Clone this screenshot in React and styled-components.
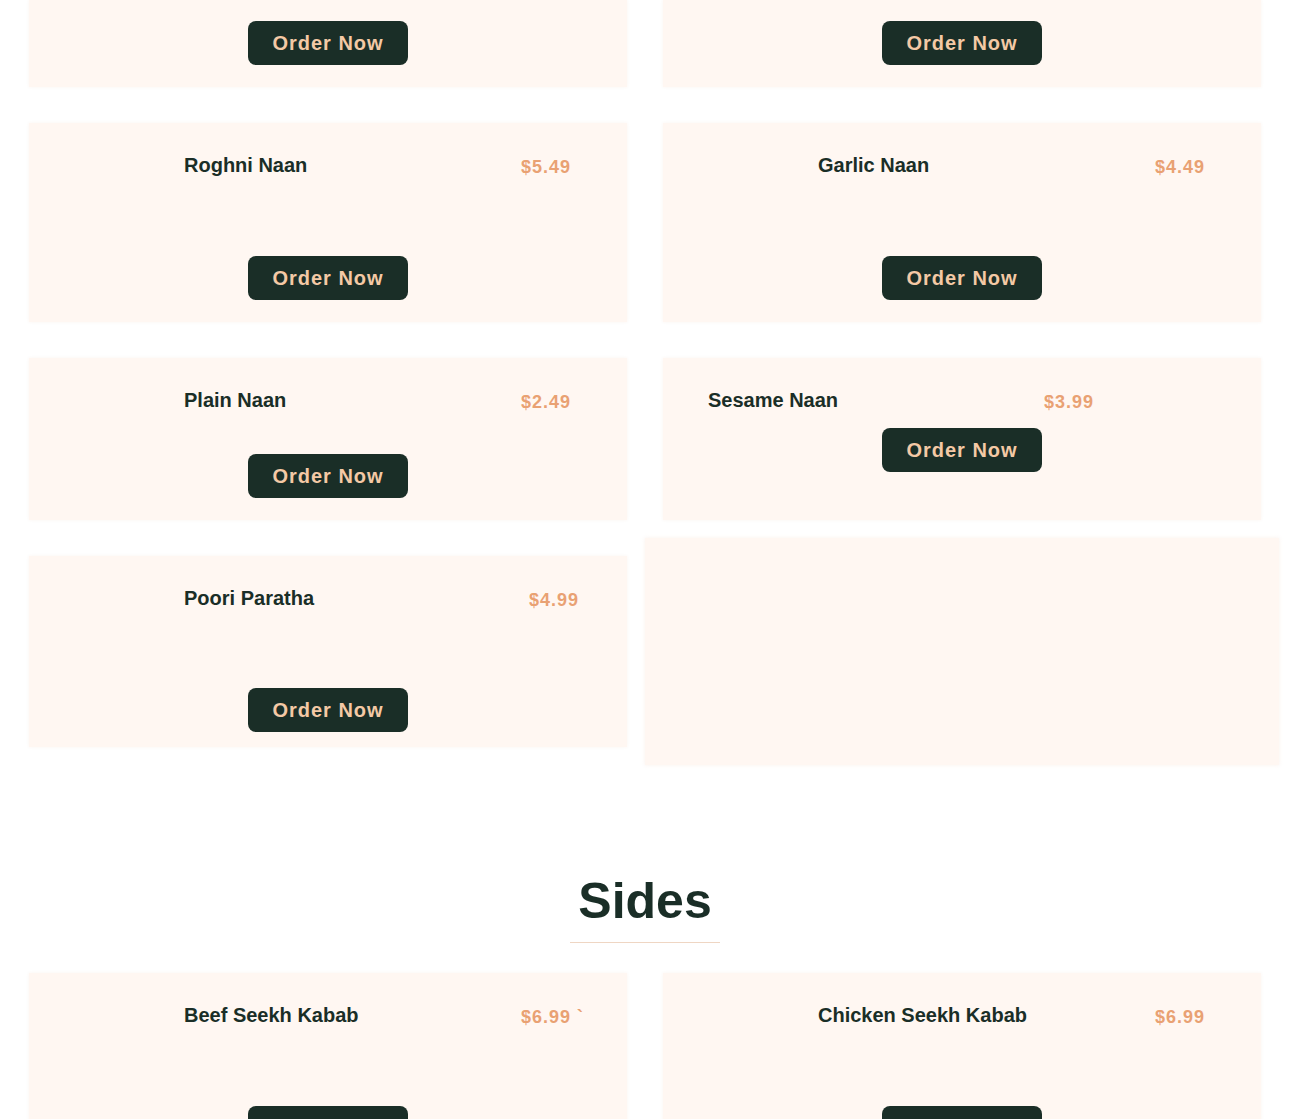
import React from 'react';
import styled, { createGlobalStyle } from 'styled-components';

const colors = {
  bg: '#ffffff',
  card: '#fff7f2',
  dark: '#1a2e27',
  peach: '#f4c9a5',
  price: '#e9a173',
  line: '#efd6c3',
};

const GlobalStyle = createGlobalStyle`
  * { box-sizing: border-box; }
  body {
    margin: 0;
    background: ${colors.bg};
    font-family: "Liberation Sans", Arial, sans-serif;
    color: ${colors.dark};
  }
`;

const naan = [
  { id: 'top-l', h: 87, top: true },
  { id: 'top-r', h: 87, top: true },
  { id: 'roghni', name: 'Roghni Naan', price: '$5.49', h: 199, pr: 56 },
  { id: 'garlic', name: 'Garlic Naan', price: '$4.49', h: 199, pr: 56 },
  { id: 'plain', name: 'Plain Naan', price: '$2.49', h: 162, pr: 56 },
  { id: 'sesame', name: 'Sesame Naan', price: '$3.99', h: 162, pl: 45, pr: 167, compact: true },
  { id: 'poori', name: 'Poori Paratha', price: '$4.99', h: 191, pr: 48, pb: 15 },
  { id: 'blank', blank: true },
];

const sides = [
  { id: 'beef', name: 'Beef Seekh Kabab', price: '$6.99 `', h: 199, pr: 43 },
  { id: 'chicken', name: 'Chicken Seekh Kabab', price: '$6.99', h: 199, pr: 56 },
];

const MenuCard = ({ item }) => {
  if (item.blank) return <GhostCard />;
  return (
    <Card $h={item.h} $top={item.top} $pb={item.pb}>
      {!item.top && (
        <Header $pl={item.pl} $pr={item.pr}>
          <Name>{item.name}</Name>
          <Price>{item.price}</Price>
        </Header>
      )}
      <OrderBtn $compact={item.compact}>Order Now</OrderBtn>
    </Card>
  );
};

const App = () => {
  return (
    <>
      <GlobalStyle />
      <Page>
        <Grid>
          {naan.map((item) => (
            <MenuCard key={item.id} item={item} />
          ))}
        </Grid>

        <SectionHead>
          <Title>Sides</Title>
          <Underline />
        </SectionHead>

        <Grid>
          {sides.map((item) => (
            <MenuCard key={item.id} item={item} />
          ))}
        </Grid>
      </Page>
    </>
  );
};

export default App;

const Page = styled.div`
  width: 1290px;
  padding: 0 29px;
  height: 1119px;
  overflow: hidden;
`;

const Grid = styled.div`
  display: grid;
  grid-template-columns: 1fr 1fr;
  column-gap: 36px;
  row-gap: 36px;
  align-items: start;
`;

const Card = styled.div`
  background: ${colors.card};
  height: ${(p) => p.$h}px;
  display: flex;
  flex-direction: column;
  padding: ${(p) => (p.$top ? '21px' : '29px')} 0 ${(p) => p.$pb || 22}px;
  box-shadow: 0 0 3px rgba(240, 220, 205, 0.3);
`;

const GhostCard = styled.div`
  background: ${colors.card};
  width: calc(100% + 36px);
  height: 227px;
  margin: -18px -18px 0;
  box-shadow: 0 0 4px rgba(240, 220, 205, 0.4);
`;

const Header = styled.div`
  display: flex;
  align-items: center;
  justify-content: space-between;
  padding: 0 ${(p) => p.$pr || 56}px 0 ${(p) => p.$pl || 155}px;
`;

const Name = styled.h3`
  margin: 0;
  font-size: 20px;
  font-weight: bold;
  line-height: 23px;
  color: ${colors.dark};
`;

const Price = styled.span`
  font-size: 18px;
  font-weight: bold;
  letter-spacing: 1px;
  line-height: 21px;
  margin-top: 5px;
  color: ${colors.price};
  white-space: pre;
`;

const OrderBtn = styled.button`
  align-self: center;
  margin-top: ${(p) => (p.$compact ? '15px' : 'auto')};
  width: 160px;
  height: 44px;
  border: none;
  border-radius: 8px;
  background: ${colors.dark};
  color: ${colors.peach};
  font-family: "Liberation Sans", Arial, sans-serif;
  font-size: 20px;
  font-weight: bold;
  letter-spacing: 1px;
  cursor: pointer;
`;

const SectionHead = styled.div`
  display: flex;
  flex-direction: column;
  align-items: center;
  margin: 107px 0 30px;
`;

const Title = styled.h2`
  margin: 0;
  font-size: 50px;
  font-weight: bold;
  line-height: 58px;
  color: ${colors.dark};
`;

const Underline = styled.div`
  width: 150px;
  height: 1px;
  margin-top: 12px;
  background: ${colors.line};
`;
